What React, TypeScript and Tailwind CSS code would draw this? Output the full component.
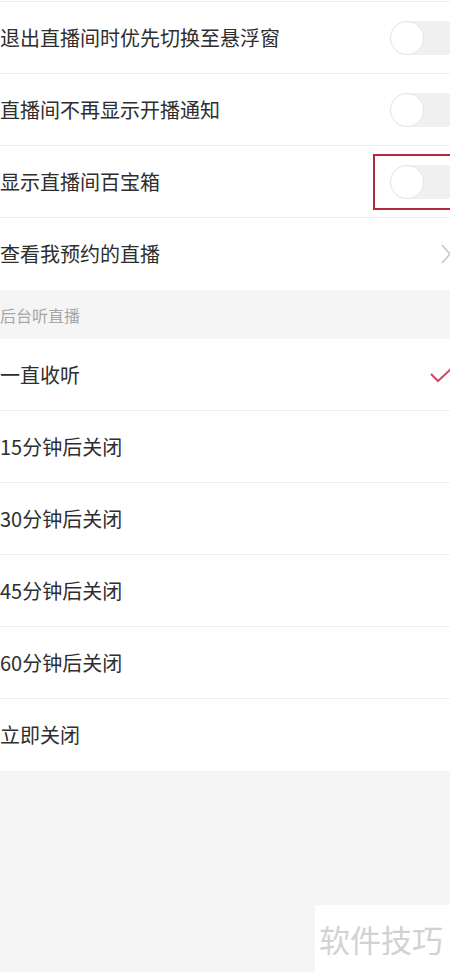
const font = "font-['Noto_Sans_CJK_SC','Noto_Sans',sans-serif]";

function Toggle() {
  return (
    <div className="relative h-[34px] w-[72px] shrink-0 rounded-full bg-[#f0f0f0]">
      <div className="absolute left-0 top-0 h-[34px] w-[34px] rounded-full border border-[#e6e6e6] bg-white" />
    </div>
  );
}

function Row({
  label,
  right,
  last,
}: {
  label: string;
  right?: React.ReactNode;
  last?: boolean;
}) {
  return (
    <div
      className={`flex h-[72px] items-center justify-between bg-white ${
        last ? "" : "border-b border-[#efefef]"
      }`}
    >
      <span className="text-[20px] leading-none text-[#2e2e2e]">{label}</span>
      {right}
    </div>
  );
}

const toggles = ["退出直播间时优先切换至悬浮窗", "直播间不再显示开播通知"];
const timers = ["15分钟后关闭", "30分钟后关闭", "45分钟后关闭", "60分钟后关闭"];

export default function App() {
  return (
    <div className={`${font} flex h-[972px] w-[450px] flex-col overflow-hidden bg-[#f5f5f5]`}>
      <div className="h-[2px] border-b border-[#efefef] bg-white" />
      {toggles.map((t) => (
        <Row key={t} label={t} right={<div className="mr-[-12px] pl-4"><Toggle /></div>} />
      ))}
      <Row
        label="显示直播间百宝箱"
        right={
          <div className="mr-[-30px] flex h-[56px] items-center border-2 border-[#b3283a] pl-[15px] pr-[16px]">
            <Toggle />
          </div>
        }
      />
      <Row
        label="查看我预约的直播"
        last
        right={
          <svg width="12" height="22" viewBox="0 0 12 22" className="mr-[-2px]">
            <path d="M2 2 L10 11 L2 20" fill="none" stroke="#c8c8c8" strokeWidth="1.6" />
          </svg>
        }
      />
      <div className="flex h-[49px] items-center text-[16px] text-[#a6a6a6]">后台听直播</div>
      <Row
        label="一直收听"
        right={
          <svg width="24" height="19" viewBox="0 0 24 19" className="mr-[-3px]">
            <path d="M2 9 L9 16 L23 3" fill="none" stroke="#d04a6c" strokeWidth="2" />
          </svg>
        }
      />
      {timers.map((t) => (
        <Row key={t} label={t} />
      ))}
      <Row label="立即关闭" last />
      <div className="flex flex-1 items-end justify-end">
        <div className="flex h-[67px] w-[135px] items-center bg-white pl-[4px]">
          <span className="whitespace-nowrap text-[31px] leading-none text-[#d2d2d2]">软件技巧</span>
        </div>
      </div>
    </div>
  );
}
